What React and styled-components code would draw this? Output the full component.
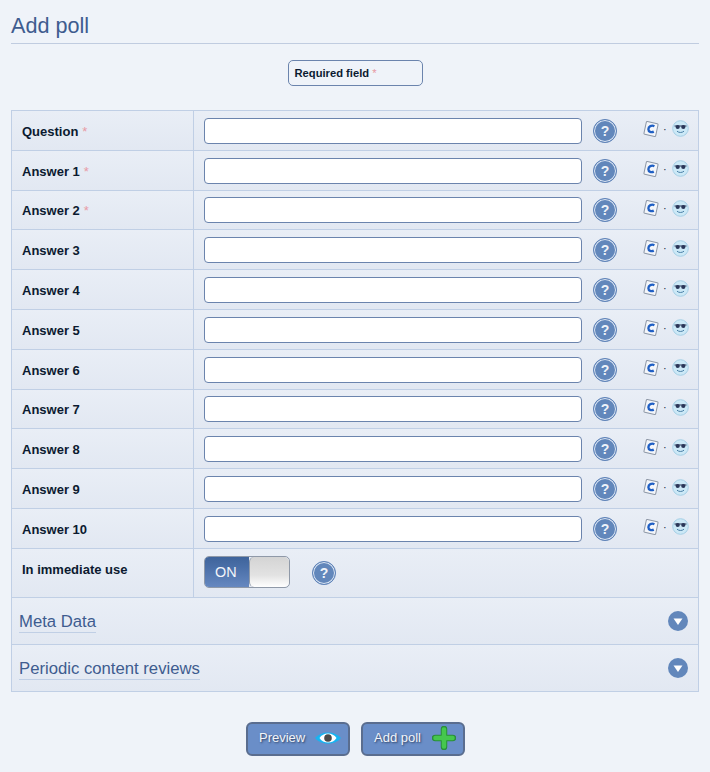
import React from "react";
import styled, { createGlobalStyle } from "styled-components";

const GlobalStyle = createGlobalStyle`
  html, body {
    margin: 0;
    padding: 0;
    background: #eff3f9;
    font-family: "Liberation Sans", Arial, sans-serif;
  }
`;

const Page = styled.div`
  width: 710px;
  height: 772px;
  box-sizing: border-box;
  padding: 11px 11px 0;
  overflow: hidden;
`;

const Title = styled.h1`
  margin: 0;
  height: 33px;
  box-sizing: border-box;
  border-bottom: 1px solid #c0cce0;
  font-size: 21.6px;
  line-height: 29px;
  font-weight: normal;
  color: #3e5c8f;
`;

const Legend = styled.div`
  width: 135px;
  height: 26px;
  box-sizing: border-box;
  margin: 16px auto 24px;
  padding-left: 6px;
  border: 1px solid #6b84ad;
  border-radius: 5px;
  font-size: 11.2px;
  font-weight: bold;
  line-height: 24px;
  color: #0b1a30;
`;

const Star = styled.span`
  font-weight: normal;
  color: #e89aa4;
`;

const Table = styled.div`
  border: 1px solid #c0cfe5;
  border-bottom-width: 0;
`;

const Row = styled.div`
  display: grid;
  grid-template-columns: 182px 1fr;
  height: ${(p) => p.$height || "39.8px"};
  box-sizing: border-box;
  border-bottom: 1px solid #c0cfe5;
  background: linear-gradient(#e9eef6, #e2e8f2);
`;

const Label = styled.div`
  display: flex;
  align-items: ${(p) => (p.$top ? "flex-start" : "center")};
  padding: ${(p) => (p.$top ? "13px 0 0 10px" : "2px 0 0 10px")};
  border-right: 1px solid #c0cfe5;
  font-size: 13px;
  font-weight: bold;
  color: #0b1a30;
  ${Star} {
    margin-left: 4px;
  }
`;

const Field = styled.div`
  display: flex;
  align-items: center;
  padding: 1px 0 0 10px;
`;

const TextInput = styled.input`
  width: 378px;
  height: 26px;
  box-sizing: border-box;
  border: 1px solid #6b84ad;
  border-radius: 4px;
  background: #fff;
`;

const HelpCircle = styled.span`
  flex: none;
  display: flex;
  align-items: center;
  justify-content: center;
  width: 24px;
  height: 24px;
  box-sizing: border-box;
  margin-left: ${(p) => p.$gap || "11px"};
  border: 1.5px solid #5f83b8;
  border-radius: 50%;
  box-shadow: inset 0 0 0 1px #dbe5f3;
  background: #6287bb;
  font-size: 14px;
  font-weight: bold;
  color: #eef3fa;
`;

const Services = styled.span`
  display: flex;
  align-items: center;
  margin: 0 0 4px 26px;
  font-size: 11px;
  color: #1a2840;
`;

const Dot = styled.span`
  margin: 0 5px 0 4px;
`;

const Toggle = styled.div`
  display: flex;
  width: 86px;
  height: 32px;
  box-sizing: border-box;
  margin-top: -3px;
  border: 1px solid #8f99a8;
  border-radius: 5px;
  overflow: hidden;
`;

const ToggleOn = styled.span`
  width: 44px;
  background: linear-gradient(#3f649b 0, #4a6fa8 35%, #6688c0 100%);
  padding-left: 10px;
  box-sizing: border-box;
  font-size: 14.4px;
  line-height: 31px;
  color: #f2f5fa;
`;

const ToggleKnob = styled.span`
  flex: 1;
  border-left: 1px solid #8f99a8;
  border-radius: 5px;
  background: linear-gradient(#d4d4d4, #e2e2e2 60%, #ffffff);
`;

const Section = styled(Row)`
  display: flex;
  align-items: center;
  justify-content: space-between;
  height: 47px;
  padding: 0 10px 0 7px;
`;

const SectionTitle = styled.span`
  padding-top: 3px;
  border-bottom: 1px solid #c0cfe5;
  font-size: 16.7px;
  line-height: 20px;
  color: #3e5c8f;
`;

const Actions = styled.div`
  display: flex;
  justify-content: center;
  gap: 11px;
  margin-top: 30px;
  padding-left: 1px;
`;

const ActionButton = styled.button`
  display: flex;
  align-items: center;
  justify-content: space-between;
  width: 104px;
  height: 34px;
  box-sizing: border-box;
  padding: 0 7px 2px 11px;
  border: 2px solid #5a6d8f;
  border-radius: 6px;
  background: #6a8ec8;
  font-family: inherit;
  font-size: 13px;
  color: #f2f5fa;
  text-shadow: 1px 1px 2px #2c3f60;
`;

const CIcon = () => (
  <svg width="16" height="16" viewBox="0 0 16 16">
    <rect x="2" y="1.5" width="12" height="13" rx="1" fill="#f4f6fa" stroke="#8d97a6" transform="rotate(12 8 8)" />
    <path d="M11.4 5.2C8.6 3.8 5.4 5.4 5.4 8.2c0 2.6 3 3.6 5.4 2.4" fill="none" stroke="#1f5fc4" strokeWidth="2.4" />
  </svg>
);

const CoolIcon = () => (
  <svg width="17" height="17" viewBox="0 0 17 17">
    <circle cx="8.5" cy="8.5" r="7.8" fill="#cbe8f6" stroke="#a5cfe6" />
    <path d="M2.5 6h12" stroke="#2a3658" strokeWidth="1" />
    <circle cx="5.7" cy="7" r="2.1" fill="#2a3658" />
    <circle cx="11.3" cy="7" r="2.1" fill="#2a3658" />
    <path d="M5 11.2c2 1.7 5 1.7 7 0" fill="none" stroke="#4a7fa6" strokeWidth="1" />
  </svg>
);

const EyeIcon = () => (
  <svg width="26" height="18" viewBox="0 0 26 18">
    <path d="M0 9C6 1.5 20 1.5 26 9 20 16.5 6 16.5 0 9z" fill="#17b4f2" />
    <path d="M4.5 9C8 3 18 3 21.5 9 18 15 8 15 4.5 9z" fill="#fff" />
    <circle cx="13" cy="9" r="3.8" fill="#4a4a4a" />
  </svg>
);

const PlusIcon = () => (
  <svg width="24" height="24" viewBox="0 0 24 24">
    <path d="M12 3v18M3 12h18" fill="none" stroke="#2a8f3a" strokeWidth="6.5" strokeLinecap="round" />
    <path d="M12 3.5v17M3.5 12h17" fill="none" stroke="#45c74e" strokeWidth="4.5" strokeLinecap="round" />
  </svg>
);

const ChevronCircle = () => (
  <svg width="20" height="20" viewBox="0 0 20 20">
    <circle cx="10" cy="10" r="10" fill="#6287bb" />
    <path d="M5.5 7.5h9L10 14z" fill="#fff" />
  </svg>
);

const fields = [
  { label: "Question", required: true },
  { label: "Answer 1", required: true },
  { label: "Answer 2", required: true },
  { label: "Answer 3" },
  { label: "Answer 4" },
  { label: "Answer 5" },
  { label: "Answer 6" },
  { label: "Answer 7" },
  { label: "Answer 8" },
  { label: "Answer 9" },
  { label: "Answer 10" },
];

export default function App() {
  return (
    <Page>
      <GlobalStyle />
      <Title>Add poll</Title>
      <Legend>
        Required field <Star>*</Star>
      </Legend>
      <Table>
        {fields.map((f) => (
          <Row key={f.label}>
            <Label>
              {f.label}
              {f.required && <Star>*</Star>}
            </Label>
            <Field>
              <TextInput type="text" />
              <HelpCircle>?</HelpCircle>
              <Services>
                <CIcon />
                <Dot>·</Dot>
                <CoolIcon />
              </Services>
            </Field>
          </Row>
        ))}
        <Row $height="49px">
          <Label $top>In immediate use</Label>
          <Field>
            <Toggle>
              <ToggleOn>ON</ToggleOn>
              <ToggleKnob />
            </Toggle>
            <HelpCircle $gap="22px">?</HelpCircle>
          </Field>
        </Row>
        <Section>
          <SectionTitle>Meta Data</SectionTitle>
          <ChevronCircle />
        </Section>
        <Section>
          <SectionTitle>Periodic content reviews</SectionTitle>
          <ChevronCircle />
        </Section>
      </Table>
      <Actions>
        <ActionButton>
          Preview
          <EyeIcon />
        </ActionButton>
        <ActionButton>
          Add poll
          <PlusIcon />
        </ActionButton>
      </Actions>
    </Page>
  );
}
